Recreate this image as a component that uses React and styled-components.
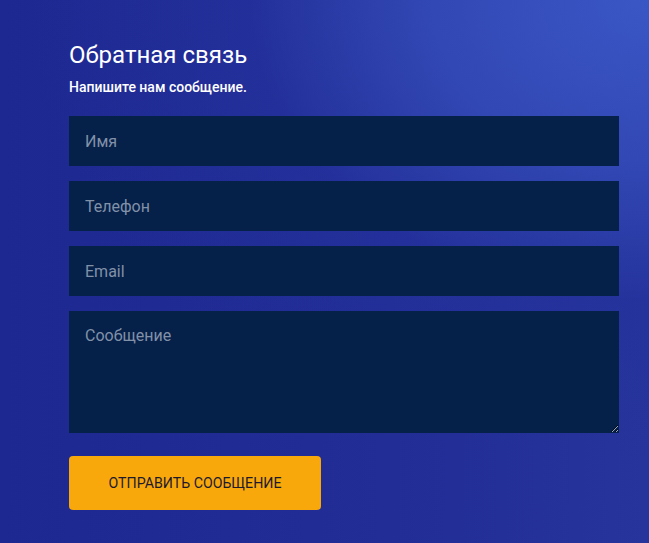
import React from "react";
import styled, { createGlobalStyle } from "styled-components";

const Global = createGlobalStyle`
  html, body {
    margin: 0;
    padding: 0;
  }
  body {
    font-family: "Roboto", "Liberation Sans", sans-serif;
  }
`;

const Page = styled.div`
  width: 649px;
  height: 543px;
  box-sizing: border-box;
  padding: 39px 30px 0 69px;
  background:
    radial-gradient(ellipse 95% 85% at 100% 0%, #3a57c6 0%, #3248b4 35%, rgba(36, 50, 158, 0.6) 65%, rgba(31, 40, 144, 0) 100%),
    linear-gradient(90deg, #1e2891 0%, #222d96 60%, #26349b 100%);
  overflow: hidden;
`;

const Title = styled.h2`
  margin: 0;
  font-size: 24px;
  font-weight: 400;
  color: #ffffff;
  line-height: 32px;
`;

const Subtitle = styled.p`
  margin: 7px 0 20px;
  font-size: 14px;
  font-weight: 500;
  color: #ffffff;
  line-height: 18px;
`;

const Form = styled.form`
  display: flex;
  flex-direction: column;
  gap: 15px;
  width: 550px;
`;

const Field = styled.input`
  box-sizing: border-box;
  height: 50px;
  width: 100%;
  border: 0;
  outline: none;
  background: #052049;
  color: #ffffff;
  padding: 0 16px;
  font-family: inherit;
  font-size: 16px;
  &::placeholder {
    color: #8191a8;
  }
`;

const Area = styled.textarea`
  box-sizing: border-box;
  height: 122px;
  width: 100%;
  border: 0;
  outline: none;
  background: #052049;
  color: #ffffff;
  padding: 15px 16px;
  font-family: inherit;
  font-size: 16px;
  resize: vertical;
  &::placeholder {
    color: #8191a8;
  }
`;

const Submit = styled.button`
  margin-top: 8px;
  width: 252px;
  height: 54px;
  border: 0;
  border-radius: 4px;
  background: #f8a80b;
  color: #1d1a2c;
  font-family: inherit;
  font-size: 14.2px;
  text-transform: uppercase;
  cursor: pointer;
`;

export default function App() {
  return (
    <>
      <Global />
      <Page>
        <Title>Обратная связь</Title>
        <Subtitle>Напишите нам сообщение.</Subtitle>
        <Form onSubmit={(e) => e.preventDefault()}>
          <Field placeholder="Имя" />
          <Field placeholder="Телефон" />
          <Field placeholder="Email" />
          <Area placeholder="Сообщение" />
          <Submit type="submit">Отправить сообщение</Submit>
        </Form>
      </Page>
    </>
  );
}
